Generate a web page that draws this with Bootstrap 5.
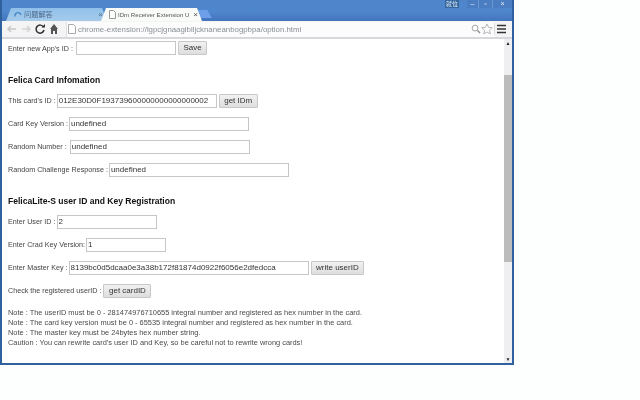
<!DOCTYPE html>
<html lang="en">
<head>
<meta charset="utf-8">
<title>IDm Receiver Extension</title>
<link href="https://cdn.jsdelivr.net/npm/bootstrap@5.3.0/dist/css/bootstrap.min.css" rel="stylesheet">
<style>
html,body{height:400px;overflow:hidden;background:#fdfefe}
body{font-family:"Liberation Sans",Arial,sans-serif;font-size:7.2px;line-height:11px;color:#444}
.winframe{width:514px;height:365px;background:#3f78bd;border:solid #2f619f;border-width:0 2px 2px 2px;filter:blur(.3px)}
.titlebar{height:21px;background:linear-gradient(#4f86cb,#4f87cc 55%,#4374be)}
.tabshape{height:13px;width:101px;margin-right:-6px;clip-path:polygon(0 100%,5px 0,calc(100% - 5px) 0,100% 100%);font-size:7.2px;padding:0 4px 0 8px}
.tabidle{background:linear-gradient(#8fc0ea,#a6cbea);color:#4c6a8c}
.tabon{background:#f8fbf8;color:#555;z-index:1;font-size:6.1px}
.tabnew{width:17px;height:8px;margin:0 0 3px -1px;background:#6c9fe8;clip-path:polygon(0 0,72% 0,100% 100%,18% 100%)}
.tabtext{white-space:nowrap;font-family:"Liberation Sans","Noto Sans CJK SC",sans-serif}
.tabicon{flex:none;margin-right:2px}
.tabclose{margin-left:auto;font-size:8px;line-height:8px}
.winctl{height:8px;color:#e4edf8;font-size:7px;line-height:8px;text-align:center}
.ctl-user{width:14px;margin-right:8px;background:#35679f;font-family:"Liberation Sans","Noto Sans CJK TC",sans-serif;font-size:6px}
.ctl-min{width:12px;background:#4a7dc2;border-right:1px solid #6a97cf}
.ctl-max{width:13px;background:#4a7dc2}
.ctl-close{width:20px;background:#4a7dc2;border-left:1px solid #6a97cf}
.toolbar{height:18px;background:#f4f4f4;border-bottom:2px solid #d8d8dc;padding:0 3px 0 3px}
.navglyph{width:14px;height:14px;flex:none}
.urlfield{height:15px;margin-left:5px;background:#fcfcfc;border-left:1px solid #dedede;color:#8a8f96;font-size:7.85px;white-space:nowrap}
.pageicon{flex:none;margin:0 2px 0 1px}
.staricon{border-right:1px solid #dcdcdc;padding-right:1px;box-sizing:content-box}
.pagewrap{height:324px;background:#fff}
.pagearea{padding:2px 0 0 6px;overflow:hidden}
.scrolltrack{width:8px;background:#efeff1}
.scrollthumb{height:187px;margin-top:28px;background:#bcbcbc}
.scrollarrow{height:8px;font-size:5px;line-height:8px;text-align:center;color:#222}
.toprow{height:14px;white-space:nowrap}
.formrow{height:23px;white-space:nowrap}
.fieldbox{height:14px;border:1px solid #c6c6c6;padding:0 1px;margin:0 0 0 1px;font-size:8px;font-family:"Liberation Sans",sans-serif;color:#333;background:#fff;border-radius:0;outline:0}
.fieldwide{margin-left:3px}
.mockbtn{height:14px;padding:0 4.5px;margin-left:2px;font-size:8px;line-height:12px;color:#333;background:linear-gradient(#f1f1f1,#dedede);border:1px solid #c8c8c8;border-radius:1px}
.sectionhead{font-size:8.55px;font-weight:700;color:#111;margin:0;line-height:12px}
.headone{margin-top:19px;margin-bottom:3px}
.headtwo{margin-top:14px;margin-bottom:3px}
.notelines{line-height:10px;font-size:7.42px;white-space:nowrap;color:#4a4a4a;margin-top:6px}
</style>
</head>
<body class="m-0">
<div class="winframe d-flex flex-column">
  <div class="titlebar d-flex">
    <div class="d-flex align-items-end flex-grow-1 ps-1">
      <div class="tabshape tabidle d-flex align-items-center"><svg class="tabicon" width="8" height="8" viewBox="0 0 8 8"><path d="M1 5.500A3 3 0 1 1 7 4" fill="none" stroke="#3f7fc0" stroke-width="1.200"/></svg><span class="tabtext">问题解答</span><span class="tabclose">×</span></div>
      <div class="tabshape tabon d-flex align-items-center"><svg class="tabicon" width="7" height="9" viewBox="0 0 7 9"><path d="M.5.500h4l2 2v6h-6z" fill="#fff" stroke="#999"/></svg><span class="tabtext">IDm Receiver Extension U</span><span class="tabclose">×</span></div>
      <div class="tabnew"></div>
    </div>
    <div class="d-flex align-items-start">
      <div class="winctl ctl-user">就位</div>
      <div class="winctl ctl-min">–</div>
      <div class="winctl ctl-max">▫</div>
      <div class="winctl ctl-close">×</div>
    </div>
  </div>
  <div class="toolbar d-flex align-items-center">
    <svg class="navglyph" viewBox="0 0 14 14"><path d="M11 7H3M6 4 3 7l3 3" fill="none" stroke="#c8c8c8" stroke-width="1.500"/></svg>
    <svg class="navglyph" viewBox="0 0 14 14"><path d="M3 7h8M8 4l3 3-3 3" fill="none" stroke="#d4d4d4" stroke-width="1.500"/></svg>
    <svg class="navglyph" viewBox="0 0 14 14"><path d="M10.500 5A4 4 0 1 0 11 8" fill="none" stroke="#333" stroke-width="1.500"/><path d="M8.500 5.500H12V2z" fill="#333"/></svg>
    <svg class="navglyph" viewBox="0 0 14 14"><path d="M7 2 3 7h1v5h2V9h2v3h2V7h1z" fill="#555"/></svg>
    <div class="urlfield flex-grow-1 d-flex align-items-center">
      <svg class="pageicon" width="8" height="10" viewBox="0 0 8 10"><path d="M.5.500h5l2 2v7h-7z" fill="#fff" stroke="#aaa"/></svg>
      <span class="flex-grow-1 overflow-hidden">chrome-extension://lgpcjgnaagiblljcknaneanbogpbpa/option.html</span>
      <svg width="10" height="10" viewBox="0 0 11 11"><circle cx="4.500" cy="4.500" r="3.200" fill="none" stroke="#999"/><path d="m7 7 3 3" stroke="#888" stroke-width="1.500"/></svg>
      <svg class="staricon ms-0" width="12" height="12" viewBox="0 0 13 13"><path d="m6.500 1 1.700 3.700 4 .4-3 2.700.9 4-3.600-2.100-3.600 2.100.9-4-3-2.700 4-.4z" fill="#fff" stroke="#b0b0b0"/></svg>
    </div>
    <svg class="navglyph" viewBox="0 0 14 14"><path d="M2 3.500h9M2 7h9M2 10.500h9" stroke="#333" stroke-width="1.500"/></svg>
  </div>
  <div class="pagewrap d-flex flex-grow-1">
    <div class="pagearea flex-grow-1">
      <div class="toprow d-flex align-items-center">Enter new App's ID :<input class="fieldbox fieldwide" style="width:100px" value=""><button class="mockbtn">Save</button></div>
      <h2 class="sectionhead headone">Felica Card Infomation</h2>
      <div class="formrow d-flex align-items-center">This card's ID :<input class="fieldbox" style="width:160px" value="012E30D0F193739600000000000000002"><button class="mockbtn">get IDm</button></div>
      <div class="formrow d-flex align-items-center">Card Key Version :<input class="fieldbox" style="width:180px" value="undefined"></div>
      <div class="formrow d-flex align-items-center">Random Number :<input class="fieldbox fieldwide" style="width:180px" value="undefined"></div>
      <div class="formrow d-flex align-items-center">Random Challenge Response :<input class="fieldbox" style="width:180px" value="undefined"></div>
      <h2 class="sectionhead headtwo">FelicaLite-S user ID and Key Registration</h2>
      <div class="formrow d-flex align-items-center">Enter User ID :<input class="fieldbox" style="width:100px" value="2"></div>
      <div class="formrow d-flex align-items-center">Enter Crad Key Version:<input class="fieldbox" style="width:80px" value="1"></div>
      <div class="formrow d-flex align-items-center">Enter Master Key :<input class="fieldbox" style="width:240px" value="8139bc0d5dcaa0e3a38b172f81874d0922f6056e2dfedcca"><button class="mockbtn">write userID</button></div>
      <div class="formrow d-flex align-items-center">Check the registered userID :<button class="mockbtn">get cardID</button></div>
      <div class="notelines">Note : The userID must be 0 - 281474976710655 integral number and registered as hex number in the card.<br>Note : The card key version must be 0 - 65535 integral number and registered as hex number in the card.<br>Note : The master key must be 24bytes hex number string.<br>Caution : You can rewrite card's user ID and Key, so be careful not to rewrite wrong cards!</div>
    </div>
    <div class="scrolltrack d-flex flex-column">
      <div class="scrollarrow">▲</div>
      <div class="scrollthumb"></div>
      <div class="flex-grow-1"></div>
      <div class="scrollarrow">▼</div>
    </div>
  </div>
</div>
<script src="https://cdn.jsdelivr.net/npm/bootstrap@5.3.0/dist/js/bootstrap.bundle.min.js"></script>
</body>
</html>
